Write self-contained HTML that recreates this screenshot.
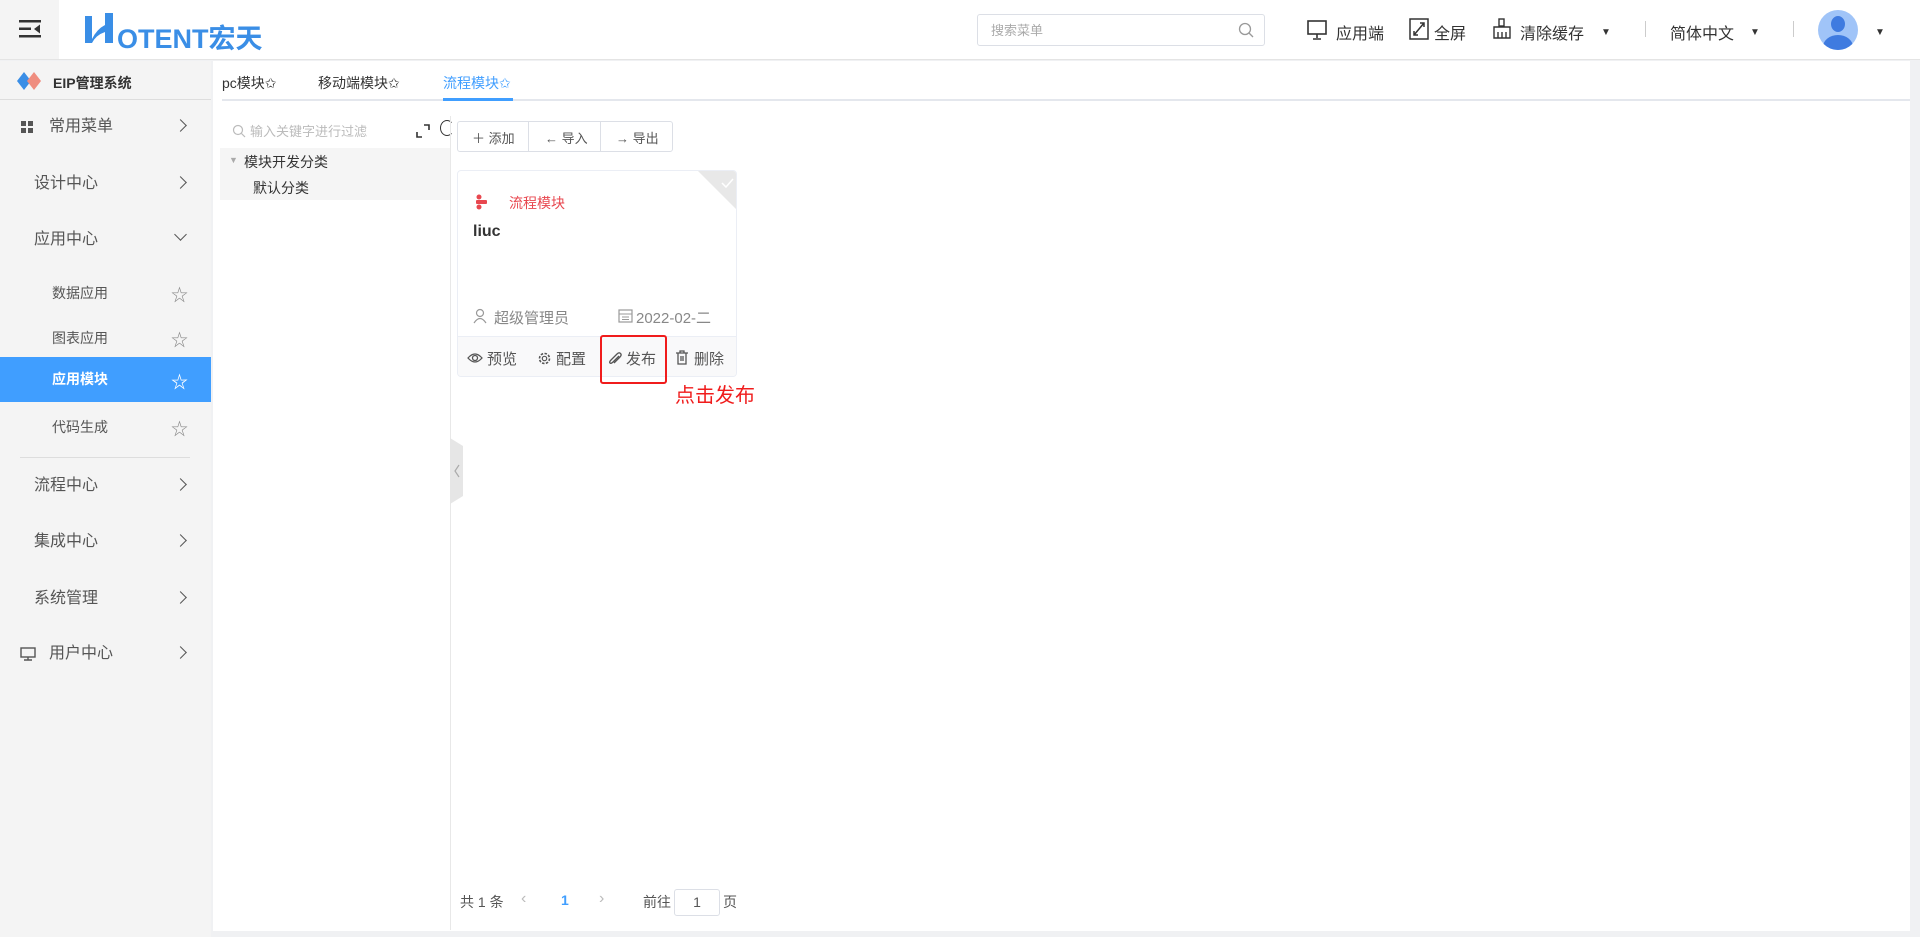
<!DOCTYPE html>
<html><head><meta charset="utf-8"><style>
*{margin:0;padding:0;box-sizing:border-box}
body{width:1920px;height:937px;overflow:hidden;background:#f0f1f3;font-family:"Liberation Sans","Noto Sans CJK SC",sans-serif;color:#555;position:relative}
.a{position:absolute;white-space:nowrap}
.hdr{left:0;top:0;width:1920px;height:60px;background:#fff;border-bottom:1px solid #e4e4e4}
.side{left:0;top:61px;width:211px;height:876px;background:#f4f4f4}
.mi{position:absolute;left:0;width:211px;height:44px;line-height:44px;font-size:16px;color:#555}
.chev{position:absolute;left:176px;top:16px;width:9px;height:9px;border-right:1.6px solid #555;border-top:1.6px solid #555;transform:rotate(45deg)}
.main{left:213px;top:61px;width:1697px;height:870px;background:#fff}
.star{position:absolute;left:171px;font-size:17px;color:#888}
.dd{position:absolute;top:27px;font-size:10px;color:#333}
</style></head><body>
<div class="a hdr"></div>
<div class="a" style="left:0;top:0;width:59px;height:59px;background:#f4f4f4"></div>
<svg class="a" style="left:19px;top:20px" width="22" height="18"><rect x="0" y="0" width="22" height="2.5" fill="#333"/><rect x="0" y="7.5" width="12" height="2.5" fill="#333"/><rect x="0" y="15" width="22" height="2.5" fill="#333"/><path d="M21 4.5 L15 9 L21 13.5Z" fill="#333"/></svg>
<svg class="a" style="left:83px;top:13px" width="36" height="32"><path d="M2 3 L9 3 L9 30 L2 30Z M22 0 L30 0 L30 30 L22 30Z M9 26 Q14 16 22 12 L22 19 Q13 22 9 30Z" fill="#3a8ee6"/></svg>
<div class="a" style="left:117px;top:17px;font-size:27px;font-weight:bold;color:#3a8ee6">OTENT宏天</div>
<div class="a" style="left:977px;top:14px;width:288px;height:32px;border:1px solid #dcdfe6;border-radius:3px"></div>
<div class="a" style="left:991px;top:20px;font-size:13px;color:#aaa">搜索菜单</div>
<svg class="a" style="left:1238px;top:22px" width="16" height="16"><circle cx="7" cy="7" r="5.5" fill="none" stroke="#999" stroke-width="1.3"/><path d="M11 11L15 15" stroke="#999" stroke-width="1.3"/></svg>
<svg class="a" style="left:1307px;top:20px" width="20" height="20"><rect x="1" y="1" width="18" height="13" fill="none" stroke="#333" stroke-width="1.6"/><path d="M10 14v4M6 19h8" stroke="#333" stroke-width="1.6"/></svg>
<div class="a" style="left:1336px;top:20px;font-size:16px;color:#333">应用端</div>
<svg class="a" style="left:1409px;top:18px" width="20" height="22"><rect x="1" y="1" width="18" height="20" fill="none" stroke="#333" stroke-width="1.5"/><path d="M5 17L15 5M11 5h4v4M5 13v4h4" fill="none" stroke="#333" stroke-width="1.5"/></svg>
<div class="a" style="left:1434px;top:20px;font-size:16px;color:#333">全屏</div>
<svg class="a" style="left:1492px;top:18px" width="20" height="22"><rect x="7" y="1" width="5" height="7" fill="none" stroke="#333" stroke-width="1.4"/><path d="M2 9h16v11H2Z M6 14v6M10 14v6M14 14v6" fill="none" stroke="#333" stroke-width="1.4"/></svg>
<div class="a" style="left:1520px;top:20px;font-size:16px;color:#333">清除缓存</div>
<div class="dd" style="left:1601px">▼</div>
<div class="a" style="left:1645px;top:21px;width:1px;height:16px;background:#ccc"></div>
<div class="a" style="left:1670px;top:20px;font-size:16px;color:#333">简体中文</div>
<div class="dd" style="left:1750px">▼</div>
<div class="a" style="left:1793px;top:21px;width:1px;height:16px;background:#ccc"></div>
<div class="a" style="left:1818px;top:10px;width:40px;height:40px;border-radius:50%;background:#a0c4f8;overflow:hidden"><div class="a" style="left:13px;top:6px;width:14px;height:16px;border-radius:50%;background:#3f7be0"></div><div class="a" style="left:5px;top:25px;width:30px;height:24px;border-radius:50%;background:#3f7be0"></div></div>
<div class="dd" style="left:1875px">▼</div>

<div class="a side"></div>
<svg class="a" style="left:17px;top:72px" width="26" height="18"><path d="M7 0L14 9L7 18L0 9Z" fill="#3a8ee6"/><path d="M17 0L24 9L17 18L10 9Z" fill="#ef8d7f"/></svg>
<div class="a" style="left:53px;top:73px;font-size:14px;font-weight:bold;color:#333">EIP管理系统</div>
<div class="a" style="left:0;top:99px;width:211px;height:1px;background:#ddd"></div>
<div class="mi" style="top:105px"><svg class="a" style="left:21px;top:16px" width="12" height="12"><rect width="5" height="5" fill="#555"/><rect x="7" width="5" height="5" fill="#555"/><rect y="7" width="5" height="5" fill="#555"/><rect x="7" y="7" width="5" height="5" fill="#555"/></svg><span class="a" style="left:49px">常用菜单</span><i class="chev"></i></div>
<div class="mi" style="top:162px"><span class="a" style="left:34px">设计中心</span><i class="chev"></i></div>
<div class="mi" style="top:218px"><span class="a" style="left:34px">应用中心</span><i class="chev" style="transform:rotate(135deg);top:12px"></i></div>
<div class="mi" style="top:271px;font-size:14px"><span class="a" style="left:52px">数据应用</span><span class="star" style="top:3px">☆</span></div>
<div class="mi" style="top:316px;font-size:14px"><span class="a" style="left:52px">图表应用</span><span class="star" style="top:3px">☆</span></div>
<div class="mi" style="top:357px;height:45px;background:#409eff;color:#fff;font-size:14px;font-weight:bold"><span class="a" style="left:52px">应用模块</span><span class="star" style="top:4px;color:#fff">☆</span></div>
<div class="mi" style="top:405px;font-size:14px"><span class="a" style="left:52px">代码生成</span><span class="star" style="top:3px">☆</span></div>
<div class="a" style="left:20px;top:457px;width:170px;height:1px;background:#ddd"></div>
<div class="mi" style="top:464px"><span class="a" style="left:34px">流程中心</span><i class="chev"></i></div>
<div class="mi" style="top:520px"><span class="a" style="left:34px">集成中心</span><i class="chev"></i></div>
<div class="mi" style="top:577px"><span class="a" style="left:34px">系统管理</span><i class="chev"></i></div>
<div class="mi" style="top:632px"><svg class="a" style="left:20px;top:15px" width="16" height="14"><rect x="1" y="1" width="14" height="9" fill="none" stroke="#555" stroke-width="1.4"/><path d="M8 10v3M4 13h8" stroke="#555" stroke-width="1.4"/></svg><span class="a" style="left:49px">用户中心</span><i class="chev"></i></div>

<div class="a main"></div>
<div class="a" style="left:222px;top:73px;font-size:14px;color:#333">pc模块✩</div>
<div class="a" style="left:318px;top:73px;font-size:14px;color:#333">移动端模块✩</div>
<div class="a" style="left:443px;top:73px;font-size:14px;color:#409eff">流程模块✩</div>
<div class="a" style="left:222px;top:99px;width:1688px;height:2px;background:#e4e7ed"></div>
<div class="a" style="left:443px;top:98px;width:70px;height:3px;background:#409eff"></div>

<svg class="a" style="left:232px;top:124px" width="14" height="14"><circle cx="6" cy="6" r="4.5" fill="none" stroke="#bbb" stroke-width="1.2"/><path d="M9.5 9.5L13 13" stroke="#bbb" stroke-width="1.2"/></svg>
<div class="a" style="left:250px;top:121px;font-size:13px;color:#bbb">输入关键字进行过滤</div>
<svg class="a" style="left:416px;top:124px" width="14" height="14"><path d="M1 8v5h5M13 6V1H8" fill="none" stroke="#333" stroke-width="1.6"/></svg>
<div class="a" style="left:440px;top:120px;width:14px;height:16px;border:1.6px solid #333;border-radius:50%;border-right-color:transparent"></div>
<div class="a" style="left:220px;top:148px;width:231px;height:52px;background:#f5f5f5"></div>
<div class="a" style="left:229px;top:155px;font-size:9px;color:#aaa">▼</div>
<div class="a" style="left:244px;top:152px;font-size:14px;color:#333">模块开发分类</div>
<div class="a" style="left:253px;top:178px;font-size:14px;color:#333">默认分类</div>
<div class="a" style="left:450px;top:116px;width:1px;height:814px;background:#e8e8e8"></div>
<svg class="a" style="left:450px;top:438px" width="14" height="66"><path d="M0 0L13 8V58L0 66Z" fill="#e6e6e6"/><path d="M9 27L5 33L9 39" fill="none" stroke="#aaa" stroke-width="1.2"/></svg>

<div class="a" style="left:457px;top:121px;width:216px;height:31px;border:1px solid #dcdfe6;border-radius:3px"></div>
<div class="a" style="left:528px;top:121px;width:1px;height:31px;background:#dcdfe6"></div>
<div class="a" style="left:600px;top:121px;width:1px;height:31px;background:#dcdfe6"></div>
<div class="a" style="left:472px;top:128px;font-size:13px;color:#555">＋ 添加</div>
<div class="a" style="left:545px;top:128px;font-size:13px;color:#555">← 导入</div>
<div class="a" style="left:616px;top:128px;font-size:13px;color:#555">→ 导出</div>

<div class="a" style="left:457px;top:170px;width:280px;height:207px;border:1px solid #ebeef5;border-radius:4px;overflow:hidden">
<svg class="a" style="left:240px;top:0" width="40" height="40"><path d="M0 0H40V40Z" fill="#e8e8e8"/><path d="M24 12L28 16L35 8" fill="none" stroke="#fff" stroke-width="1.5"/></svg>
<svg class="a" style="left:17px;top:23px" width="14" height="16"><circle cx="4" cy="3" r="2.5" fill="#e8474f"/><rect x="1" y="6" width="11" height="4" rx="1" fill="#e8474f"/><circle cx="4" cy="13" r="2.5" fill="#e8474f"/></svg>
<div class="a" style="left:51px;top:22px;font-size:14px;color:#e8474f">流程模块</div>
<div class="a" style="left:15px;top:52px;font-size:16px;font-weight:bold;color:#333">liuc</div>
<svg class="a" style="left:15px;top:137px" width="14" height="16"><circle cx="7" cy="5" r="3.5" fill="none" stroke="#999" stroke-width="1.2"/><path d="M1 15Q7 6 13 15" fill="none" stroke="#999" stroke-width="1.2"/></svg>
<div class="a" style="left:36px;top:136px;font-size:15px;color:#888">超级管理员</div>
<svg class="a" style="left:160px;top:137px" width="15" height="15"><rect x="1" y="2" width="13" height="12" fill="none" stroke="#999" stroke-width="1.2"/><path d="M1 6h13M4 9h7M4 11.5h7" stroke="#999"/></svg>
<div class="a" style="left:178px;top:136px;font-size:15px;color:#888">2022-02-二</div>
<div class="a" style="left:0;top:165px;width:280px;height:42px;background:#f9f9fa;border-top:1px solid #ebeef5"></div>
<svg class="a" style="left:9px;top:181px" width="16" height="12"><path d="M1 6Q8 -2 15 6Q8 14 1 6Z" fill="none" stroke="#555" stroke-width="1.3"/><circle cx="8" cy="6" r="2.5" fill="none" stroke="#555" stroke-width="1.3"/></svg>
<div class="a" style="left:29px;top:177px;font-size:15px;color:#555">预览</div>
<svg class="a" style="left:79px;top:180px" width="15" height="15"><circle cx="7.5" cy="7.5" r="5" fill="none" stroke="#555" stroke-width="1.6" stroke-dasharray="2.5 1.4"/><circle cx="7.5" cy="7.5" r="2.2" fill="none" stroke="#555" stroke-width="1.2"/></svg>
<div class="a" style="left:98px;top:177px;font-size:15px;color:#555">配置</div>
<svg class="a" style="left:150px;top:180px" width="14" height="15"><path d="M11 5L5 11Q3 13 2 12Q1 11 3 9L9 3Q11 1 12.5 2.5Q14 4 12 6L6 12" fill="none" stroke="#555" stroke-width="1.3"/></svg>
<div class="a" style="left:168px;top:177px;font-size:15px;color:#555">发布</div>
<svg class="a" style="left:217px;top:179px" width="14" height="16"><path d="M1 3h12M5 3V1h4v2M3 3v11h8V3M6 6v5M8 6v5" fill="none" stroke="#555" stroke-width="1.3"/></svg>
<div class="a" style="left:236px;top:177px;font-size:15px;color:#555">删除</div>
</div>
<div class="a" style="left:600px;top:335px;width:67px;height:49px;border:2px solid #f01c1c;border-radius:3px"></div>
<div class="a" style="left:675px;top:379px;font-size:20px;color:#f01c1c">点击发布</div>

<div class="a" style="left:460px;top:892px;font-size:14px;color:#555">共 1 条</div>
<div class="a" style="left:521px;top:890px;font-size:16px;color:#bbb">‹</div>
<div class="a" style="left:561px;top:892px;font-size:14px;font-weight:bold;color:#409eff">1</div>
<div class="a" style="left:599px;top:890px;font-size:16px;color:#bbb">›</div>
<div class="a" style="left:643px;top:892px;font-size:14px;color:#555">前往</div>
<div class="a" style="left:674px;top:889px;width:46px;height:27px;border:1px solid #dcdfe6;border-radius:3px;text-align:center;line-height:25px;font-size:14px;color:#555">1</div>
<div class="a" style="left:723px;top:892px;font-size:14px;color:#555">页</div>
</body></html>
